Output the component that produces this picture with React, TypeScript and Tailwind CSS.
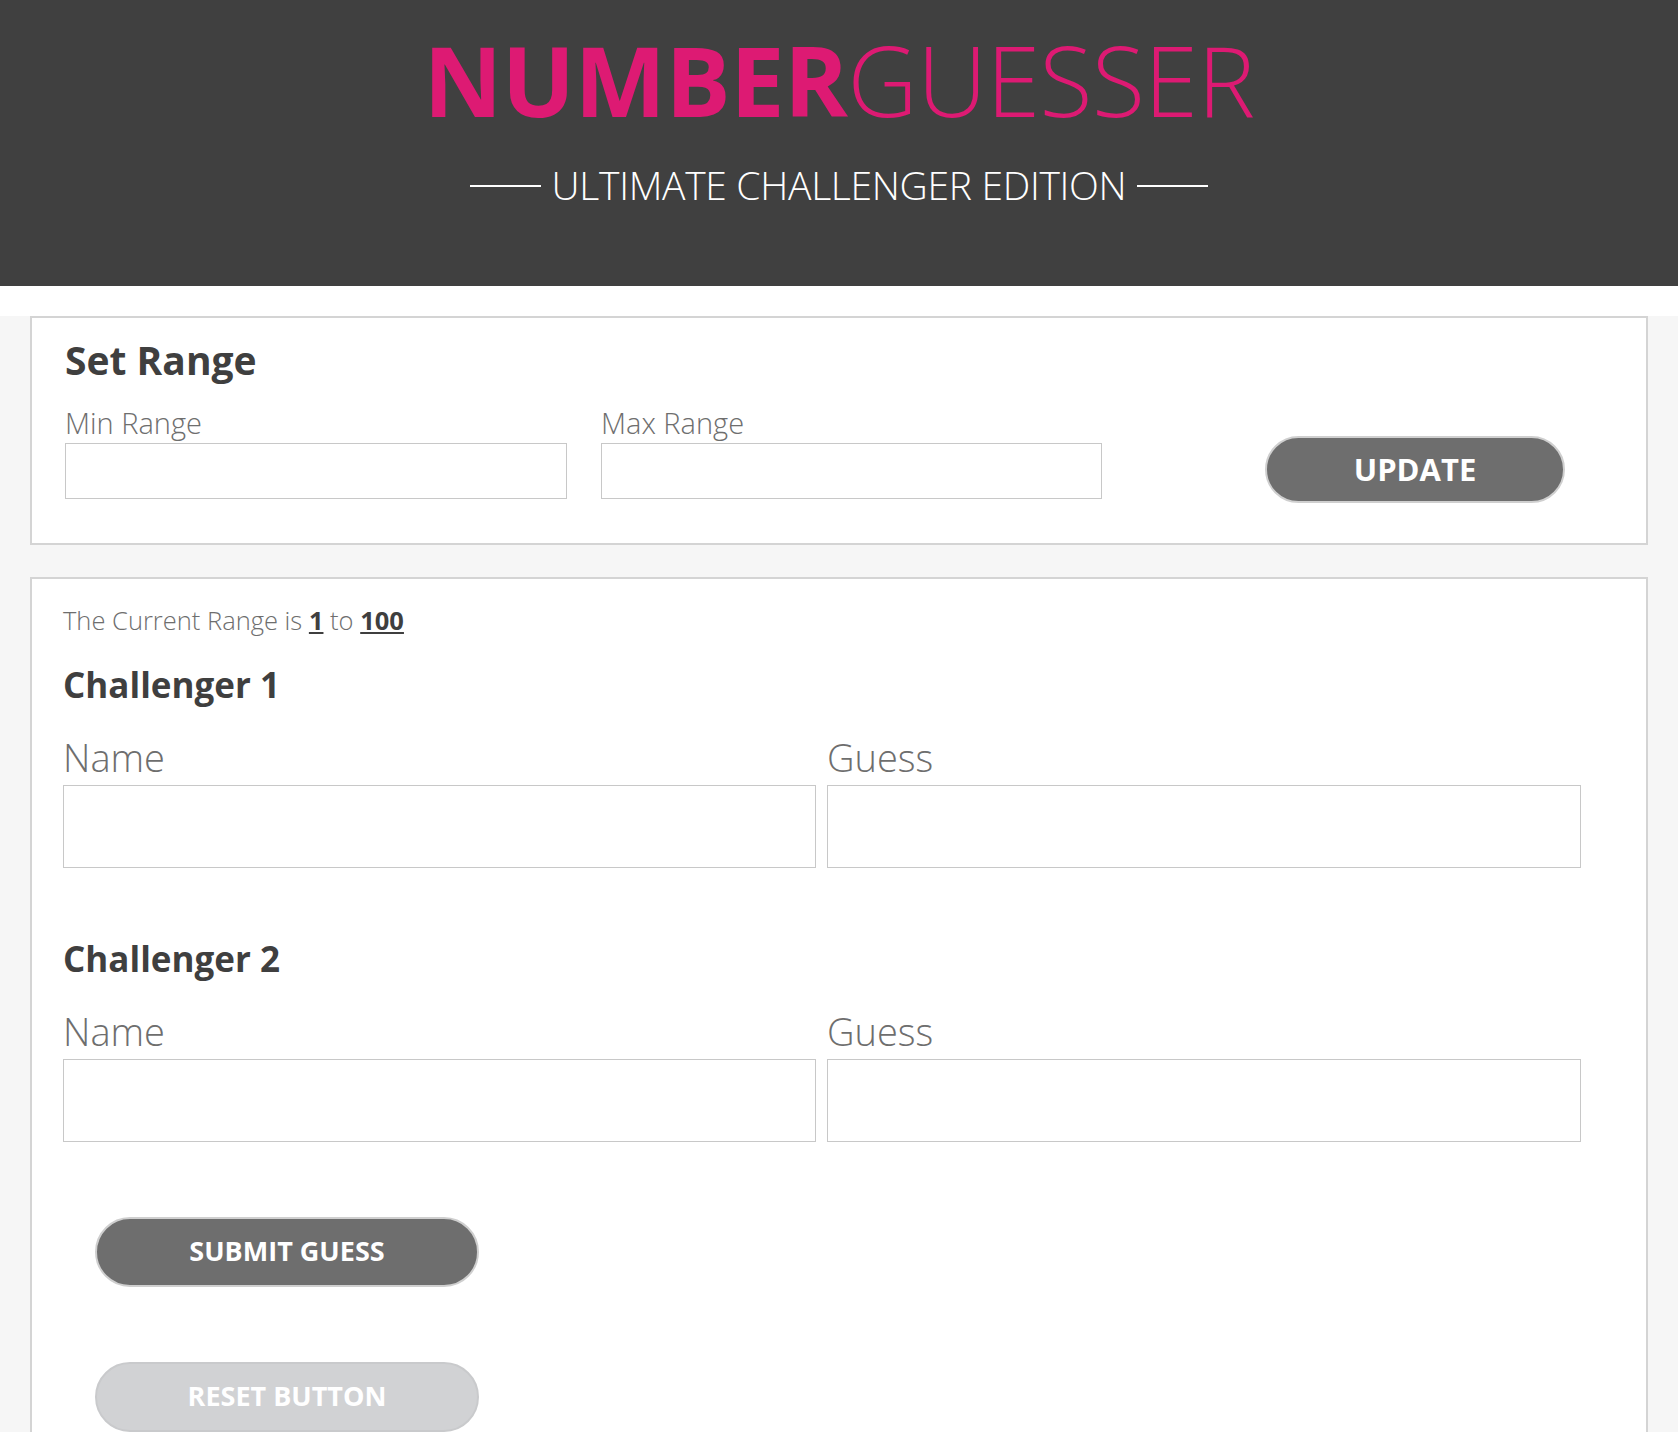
import React from "react";

const Field = ({ label, width, labelSize }: { label: string; width: string; labelSize: "sm" | "lg" }) => {
  return (
    <div className="flex flex-col">
      <label
        className={
          labelSize === "sm"
            ? "text-[29px] leading-none font-light text-[#6e6e6e]"
            : "text-[38px] leading-none font-light text-[#6e6e6e]"
        }
      >
        {label}
      </label>
      <input
        type="text"
        className={
          labelSize === "sm"
            ? `mt-[6px] h-[56px] ${width} border border-[#c8c8c8] bg-white outline-none`
            : `mt-[9px] h-[83px] ${width} border border-[#c8c8c8] bg-white outline-none`
        }
      />
    </div>
  );
};

const Challenger = ({ n, first }: { n: number; first: boolean }) => {
  return (
    <div className={first ? "mt-[33px]" : "mt-[73px]"}>
      <h3 className="text-[35px] leading-none font-bold text-[#3f3f3f]">Challenger {n}</h3>
      <div className="mt-[36px] flex gap-[11px]">
        <Field label="Name" width="w-[753px]" labelSize="lg" />
        <Field label="Guess" width="w-[754px]" labelSize="lg" />
      </div>
    </div>
  );
};

const App = () => {
  return (
    <div className="h-[1432px] overflow-hidden bg-white font-['Open_Sans',sans-serif]">
      <header className="h-[286px] bg-[#404040] flex flex-col items-center pt-[31px]">
        <h1 className="text-[97px] leading-none tracking-[-0.5px] text-[#dd1a73]">
          <span className="font-bold">NUMBER</span>
          <span className="font-light">GUESSER</span>
        </h1>
        <div className="mt-[37px] flex items-center gap-[11px]">
          <span className="block w-[71px] h-[2px] bg-white mt-[3px]" />
          <span className="text-[39px] leading-none tracking-[-0.3px] font-light text-white">
            ULTIMATE CHALLENGER EDITION
          </span>
          <span className="block w-[71px] h-[2px] bg-white mt-[3px]" />
        </div>
      </header>

      <main className="mt-[30px] bg-[#f6f6f6] px-[30px] h-full">
        <section className="bg-white border-2 border-[#d4d4d4] pt-[22px] pl-[33px] pb-[44px]">
          <h2 className="text-[39px] leading-none font-bold text-[#3f3f3f]">Set Range</h2>
          <div className="mt-[29px] flex items-end">
            <Field label="Min Range" width="w-[502px]" labelSize="sm" />
            <div className="ml-[34px]">
              <Field label="Max Range" width="w-[501px]" labelSize="sm" />
            </div>
            <button className="ml-[163px] mb-[-4px] w-[300px] h-[67px] rounded-full bg-[#6e6e6e] border-2 border-[#cfcfcf] text-white font-bold text-[31px]">
              UPDATE
            </button>
          </div>
        </section>

        <section className="mt-[32px] bg-white border-2 border-[#d4d4d4] pt-[29px] pl-[31px] pb-[40px]">
          <p className="text-[25.5px] leading-none font-light text-[#6e6e6e]">
            The Current Range is <span className="font-bold text-[#3f3f3f] underline">1</span> to{" "}
            <span className="font-bold text-[#3f3f3f] underline">100</span>
          </p>
          <Challenger n={1} first={true} />
          <Challenger n={2} first={false} />
          <div className="flex flex-col ml-[32px]">
            <button className="mt-[75px] w-[384px] h-[70px] rounded-full bg-[#6e6e6e] border-2 border-[#cfcfcf] text-white font-bold text-[27px]">
              SUBMIT GUESS
            </button>
            <button className="mt-[75px] w-[384px] h-[70px] rounded-full bg-[#d1d2d4] border-2 border-[#c9cacc] text-white font-bold text-[27px]">
              RESET BUTTON
            </button>
          </div>
        </section>
      </main>
    </div>
  );
};

export default App;
